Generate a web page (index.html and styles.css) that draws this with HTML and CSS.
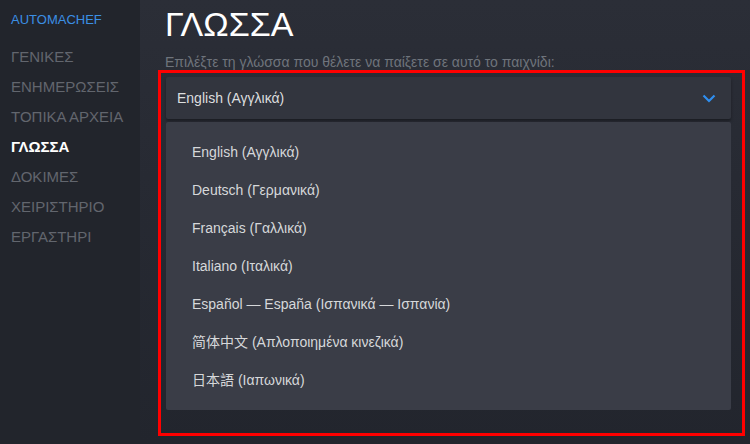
FILE: index.html
```html
<!DOCTYPE html>
<html>
<head lang="el">
    <meta charset="UTF-8">
    <title>Γλώσσα</title>
    <link rel="stylesheet" href="styles.css">
</head>
<body>
<div id="page">
    <div id="sidebar">
        <div class="game-name">AUTOMACHEF</div>
        <ul class="nav">
            <li>ΓΕΝΙΚΕΣ</li>
            <li>ΕΝΗΜΕΡΩΣΕΙΣ</li>
            <li>ΤΟΠΙΚΑ ΑΡΧΕΙΑ</li>
            <li class="active">ΓΛΩΣΣΑ</li>
            <li>ΔΟΚΙΜΕΣ</li>
            <li>ΧΕΙΡΙΣΤΗΡΙΟ</li>
            <li>ΕΡΓΑΣΤΗΡΙ</li>
        </ul>
    </div>
    <div id="main">
        <h1 class="title">ΓΛΩΣΣΑ</h1>
        <p class="subtitle">Επιλέξτε τη γλώσσα που θέλετε να παίξετε σε αυτό το παιχνίδι:</p>
        <div class="highlight">
            <div class="select">
                <span>English (Αγγλικά)</span>
                <svg class="chevron" width="14" height="9" viewBox="0 0 14 9">
                    <path d="M1.5 1.5 L7 7 L12.5 1.5" fill="none" stroke="#2f8ff0" stroke-width="2.2"/>
                </svg>
            </div>
            <ul class="options">
                <li>English (Αγγλικά)</li>
                <li>Deutsch (Γερμανικά)</li>
                <li>Français (Γαλλικά)</li>
                <li>Italiano (Ιταλικά)</li>
                <li>Español — España (Ισπανικά — Ισπανία)</li>
                <li>简体中文 (Απλοποιημένα κινεζικά)</li>
                <li>日本語 (Ιαπωνικά)</li>
            </ul>
        </div>
    </div>
</div>
</body>
</html>
```

FILE: styles.css
```css
* {
    margin: 0;
    padding: 0;
}

ul {
    list-style: none;
}

html, body {
    height: 100%;
}

body {
    background-color: #23262e;
    font-family: "Liberation Sans", Arial, "Noto Sans CJK SC", sans-serif;
    overflow: hidden;
}

#page {
    display: flex;
    height: 444px;
}

#sidebar {
    width: 140px;
    flex-shrink: 0;
    background-color: #22252c;
    padding: 12px 0 0 11px;
    box-sizing: border-box;
}

.game-name {
    color: #3b8fe4;
    font-size: 13px;
    line-height: 15px;
    height: 30px;
}

.nav li {
    color: #62666e;
    font-size: 15px;
    line-height: 30px;
}

.nav li.active {
    color: #ffffff;
    font-weight: bold;
}

#main {
    flex: 1;
    padding: 0 5px 0 18px;
    background: linear-gradient(to bottom, #2b2e37 0%, #272a33 40%, #22252d 100%);
}

.title {
    color: #ffffff;
    font-size: 34px;
    font-weight: normal;
    line-height: 40px;
    padding: 4px 0 0 7px;
}

.subtitle {
    color: #6f747c;
    font-size: 14px;
    line-height: 16px;
    padding: 10px 0 0 7px;
    height: 16px;
}

.highlight {
    border: 3px solid #ff0000;
    padding: 4px 11px 23px 5px;
}

.select {
    height: 42px;
    background-color: #32353e;
    border-radius: 2px;
    display: flex;
    align-items: center;
    justify-content: space-between;
    padding: 0 15px 0 11px;
    color: #dcdedf;
    font-size: 14px;
    box-shadow: 0 2px 3px rgba(0, 0, 0, 0.35);
}

.options {
    margin-top: 3px;
    background-color: #3a3d47;
    border-radius: 2px;
    padding: 11px 0;
}

.options li {
    color: #d6d8da;
    font-size: 14px;
    line-height: 38px;
    padding-left: 26px;
}
```
